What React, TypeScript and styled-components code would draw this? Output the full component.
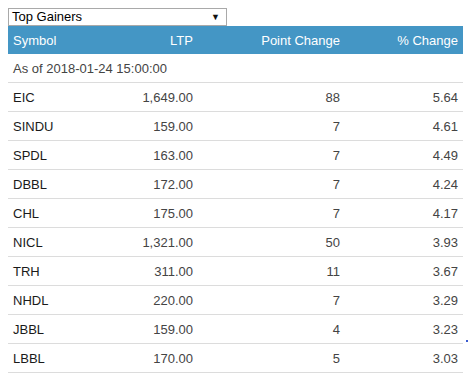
import React from "react";
import styled, { createGlobalStyle } from "styled-components";

const Global = createGlobalStyle`
  html, body { margin: 0; padding: 0; background: #fff; }
  body { font-family: "Liberation Sans", Arial, sans-serif; font-size: 13px; color: #333; }
`;

const Page = styled.div`
  position: relative;
  padding: 8px 0 0 8px;
  width: 455px;
`;

const Select = styled.div`
  box-sizing: border-box;
  width: 219px;
  height: 18px;
  border: 1px solid #a9a9a9;
  display: flex;
  align-items: center;
  justify-content: space-between;
  padding: 0 6px 0 3px;
  font-size: 13px;
  color: #000;
  line-height: 16px;
`;

const Arrow = styled.span`
  font-size: 9px;
  color: #111;
  line-height: 1;
`;

const Table = styled.table`
  border-collapse: collapse;
  width: 455px;
  table-layout: fixed;
`;

const HeadCell = styled.th<{ $w: number; $align?: string }>`
  width: ${(p) => p.$w}px;
  background: #4496c5;
  color: #fff;
  font-weight: normal;
  font-size: 13px;
  height: 28px;
  padding: 0 5px;
  text-align: ${(p) => p.$align || "right"};
  box-sizing: border-box;
`;

const Row = styled.tr`
  border-bottom: 1px solid #dcdcdc;
`;

const Cell = styled.td<{ $align?: string; $sym?: boolean }>`
  height: 28px;
  padding: 0 5px;
  text-align: ${(p) => p.$align || "right"};
  color: ${(p) => (p.$sym ? "#1a1a1a" : "#444")};
  font-size: 13px;
`;

const Dot = styled.span`
  position: absolute;
  left: 466px;
  top: 340px;
  width: 2px;
  height: 2px;
  background: #3a5bd0;
`;

const data: [string, string, string, string][] = [
  ["EIC", "1,649.00", "88", "5.64"],
  ["SINDU", "159.00", "7", "4.61"],
  ["SPDL", "163.00", "7", "4.49"],
  ["DBBL", "172.00", "7", "4.24"],
  ["CHL", "175.00", "7", "4.17"],
  ["NICL", "1,321.00", "50", "3.93"],
  ["TRH", "311.00", "11", "3.67"],
  ["NHDL", "220.00", "7", "3.29"],
  ["JBBL", "159.00", "4", "3.23"],
  ["LBBL", "170.00", "5", "3.03"],
];

export default function App() {
  return (
    <>
      <Global />
      <Page>
        <Select>
          <span>Top Gainers</span>
          <Arrow>▼</Arrow>
        </Select>
        <Table>
          <thead>
            <tr>
              <HeadCell $w={92} $align="left">Symbol</HeadCell>
              <HeadCell $w={98}>LTP</HeadCell>
              <HeadCell $w={147}>Point Change</HeadCell>
              <HeadCell $w={118}>% Change</HeadCell>
            </tr>
          </thead>
          <tbody>
            <Row>
              <Cell colSpan={4} $align="left">As of 2018-01-24 15:00:00</Cell>
            </Row>
            {data.map(([s, l, p, c]) => (
              <Row key={s}>
                <Cell $align="left" $sym>{s}</Cell>
                <Cell>{l}</Cell>
                <Cell>{p}</Cell>
                <Cell>{c}</Cell>
              </Row>
            ))}
          </tbody>
        </Table>
        <Dot />
      </Page>
    </>
  );
}
